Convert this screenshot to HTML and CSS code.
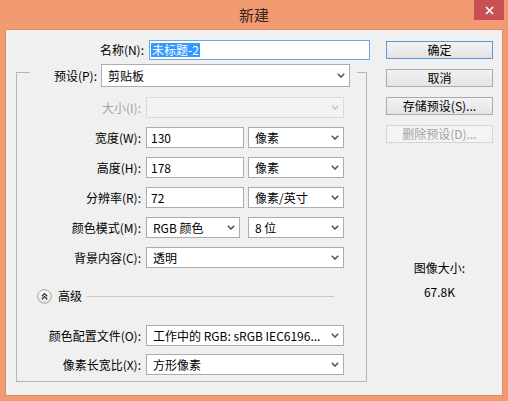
FILE: index.html
```html
<!DOCTYPE html>
<html lang="zh-CN">
<head>
<meta charset="utf-8">
<title>新建</title>
<link rel="stylesheet" href="styles.css">
</head>
<body>
<div class="window">
  <div class="titlebar">
    <div class="title">新建</div>
    <div class="close"><svg width="9" height="9" viewBox="0 0 9 9"><path d="M1 1L8 8M8 1L1 8" stroke="#fff" stroke-width="1.7" fill="none"/></svg></div>
  </div>
  <div class="client">
    <div class="form">
      <div class="name-row">
        <span class="name-label">名称(N):</span>
        <div class="textbox name-box"><span class="sel">未标题-2</span></div>
      </div>
      <fieldset class="group">
        <legend class="legend">
          <div class="preset-row">
            <span class="preset-label">预设(P):</span>
            <div class="combo preset-combo"><span class="combo-text">剪贴板</span><svg class="arrow" width="8" height="5" viewBox="0 0 8 5"><path d="M0.8 0.8L4 4L7.2 0.8" stroke="#555" stroke-width="1.6" fill="none"/></svg></div>
          </div>
        </legend>
        <div class="rows">
          <div class="row">
            <span class="label disabled">大小(I):</span>
            <div class="combo wide disabled-combo"><span class="combo-text"></span><svg class="arrow" width="8" height="5" viewBox="0 0 8 5"><path d="M0.8 0.8L4 4L7.2 0.8" stroke="#C4C4C4" stroke-width="1.6" fill="none"/></svg></div>
          </div>
          <div class="row">
            <span class="label">宽度(W):</span>
            <div class="textbox num">130</div>
            <div class="combo unit"><span class="combo-text">像素</span><svg class="arrow" width="8" height="5" viewBox="0 0 8 5"><path d="M0.8 0.8L4 4L7.2 0.8" stroke="#555" stroke-width="1.6" fill="none"/></svg></div>
          </div>
          <div class="row">
            <span class="label">高度(H):</span>
            <div class="textbox num">178</div>
            <div class="combo unit"><span class="combo-text">像素</span><svg class="arrow" width="8" height="5" viewBox="0 0 8 5"><path d="M0.8 0.8L4 4L7.2 0.8" stroke="#555" stroke-width="1.6" fill="none"/></svg></div>
          </div>
          <div class="row">
            <span class="label">分辨率(R):</span>
            <div class="textbox num">72</div>
            <div class="combo unit"><span class="combo-text">像素/英寸</span><svg class="arrow" width="8" height="5" viewBox="0 0 8 5"><path d="M0.8 0.8L4 4L7.2 0.8" stroke="#555" stroke-width="1.6" fill="none"/></svg></div>
          </div>
          <div class="row">
            <span class="label">颜色模式(M):</span>
            <div class="combo mode"><span class="combo-text">RGB 颜色</span><svg class="arrow" width="8" height="5" viewBox="0 0 8 5"><path d="M0.8 0.8L4 4L7.2 0.8" stroke="#555" stroke-width="1.6" fill="none"/></svg></div>
            <div class="combo unit bits"><span class="combo-text">8 位</span><svg class="arrow" width="8" height="5" viewBox="0 0 8 5"><path d="M0.8 0.8L4 4L7.2 0.8" stroke="#555" stroke-width="1.6" fill="none"/></svg></div>
          </div>
          <div class="row">
            <span class="label">背景内容(C):</span>
            <div class="combo wide"><span class="combo-text">透明</span><svg class="arrow" width="8" height="5" viewBox="0 0 8 5"><path d="M0.8 0.8L4 4L7.2 0.8" stroke="#555" stroke-width="1.6" fill="none"/></svg></div>
          </div>
        </div>
        <div class="advanced">
          <svg class="adv-icon" width="15" height="15" viewBox="0 0 15 15">
            <defs><linearGradient id="g" x1="0" y1="0" x2="0" y2="1"><stop offset="0" stop-color="#ffffff"/><stop offset="1" stop-color="#e2e2e2"/></linearGradient></defs>
            <circle cx="7.5" cy="7.5" r="6.8" fill="url(#g)" stroke="#A2A2A2" stroke-width="1"/>
            <path d="M4.8 7.2L7.5 4.6L10.2 7.2M4.8 10.2L7.5 7.6L10.2 10.2" stroke="#333" stroke-width="1.3" fill="none"/>
          </svg>
          <span class="adv-text">高级</span>
          <div class="adv-line"></div>
        </div>
        <div class="rows profile-rows">
          <div class="row">
            <span class="label">颜色配置文件(O):</span>
            <div class="combo wide"><span class="combo-text">工作中的 RGB: sRGB IEC6196...</span><svg class="arrow" width="8" height="5" viewBox="0 0 8 5"><path d="M0.8 0.8L4 4L7.2 0.8" stroke="#555" stroke-width="1.6" fill="none"/></svg></div>
          </div>
          <div class="row">
            <span class="label">像素长宽比(X):</span>
            <div class="combo wide"><span class="combo-text">方形像素</span><svg class="arrow" width="8" height="5" viewBox="0 0 8 5"><path d="M0.8 0.8L4 4L7.2 0.8" stroke="#555" stroke-width="1.6" fill="none"/></svg></div>
          </div>
        </div>
      </fieldset>
    </div>
    <div class="side">
      <div class="btn default">确定</div>
      <div class="btn">取消</div>
      <div class="btn">存储预设(S)...</div>
      <div class="btn disabled-btn">删除预设(D)...</div>
      <div class="info">
        <div>图像大小:</div>
        <div>67.8K</div>
      </div>
    </div>
  </div>
</div>
</body>
</html>
```

FILE: styles.css
```css
* { box-sizing: border-box; }
html, body { margin: 0; padding: 0; }
body {
  width: 508px;
  height: 401px;
  overflow: hidden;
  background: #F29B73;
  font-family: "Noto Sans CJK SC", "Noto Sans", sans-serif;
  font-size: 12px;
  color: #000;
}
.window {
  display: flex;
  flex-direction: column;
  height: 401px;
  padding: 0 5px 5px;
}
.titlebar {
  height: 29px;
  margin: 0 -5px;
  display: grid;
  grid-template-columns: 1fr auto 1fr;
}
.title {
  grid-column: 2;
  font-size: 15px;
  line-height: 29px;
  color: #3a2519;
}
.close {
  grid-column: 3;
  justify-self: end;
  align-self: start;
  width: 30px;
  height: 20px;
  margin-right: 4px;
  background: #C75050;
  display: flex;
  align-items: center;
  justify-content: center;
}
.client {
  flex: 1;
  display: flex;
  background: #F0F0F0;
  border: 1px solid #E2895F;
}
.form {
  width: 364px;
  padding: 10px 0 0 10px;
}
.name-row {
  display: flex;
  align-items: center;
  height: 20px;
}
.name-label {
  width: 128px;
  margin-right: 5px;
  text-align: right;
  line-height: 16px;
}
.textbox {
  display: flex;
  align-items: center;
  height: 21px;
  background: #fff;
  border: 1px solid #ABADB3;
  padding: 0 4px;
  line-height: 16px;
}
.name-box {
  width: 221px;
  height: 20px;
  border-color: #6FA8E0;
  padding: 0 1px;
}
.sel {
  display: inline-block;
  background: #3399FF;
  color: #fff;
  line-height: 14px;
  height: 14px;
  padding: 0 1px;
}
.group {
  width: 351px;
  margin: -3px 0 0 0;
  padding: 10px 8px 6px 13px;
  border: 1px solid #B4B4B4;
  min-width: 0;
}
.legend {
  padding: 7px 7px 0 0;
  margin: 0;
}
.preset-row {
  display: flex;
  align-items: center;
}
.preset-label {
  width: 67px;
  margin-right: 4px;
  text-align: right;
  line-height: 16px;
}
.combo {
  display: flex;
  align-items: center;
  height: 21px;
  background: #fff;
  border: 1px solid #ACACAC;
  padding: 0 4px 0 6px;
  line-height: 16px;
}
.combo-text {
  flex: 1;
  white-space: nowrap;
  overflow: hidden;
}
.arrow { flex: none; margin-left: 2px; }
.preset-combo {
  width: 249px;
  height: 23px;
}
.rows {
  display: flex;
  flex-direction: column;
  gap: 9px;
}
.row {
  display: flex;
  align-items: center;
  height: 21px;
}
.label {
  width: 111px;
  margin-right: 5px;
  text-align: right;
  line-height: 16px;
  white-space: nowrap;
}
.label.disabled { color: #A3A3A3; }
.wide { width: 198px; }
.num { width: 98px; margin-right: 4px; }
.unit { width: 96px; }
.mode { width: 94px; margin-right: 8px; }
.disabled-combo {
  background: #F3F3F3;
  border-color: #D9D9D9;
}
.advanced {
  display: flex;
  align-items: center;
  height: 16px;
  margin-top: 20px;
}
.adv-icon { margin-left: 7px; flex: none; }
.adv-text {
  margin-left: 6px;
  line-height: 16px;
}
.adv-line {
  flex: 1;
  height: 1px;
  background: #C6C6C6;
  margin: 0 24px 0 5px;
}
.profile-rows {
  margin-top: 21px;
  gap: 8px;
}
.side {
  width: 107px;
  margin-left: 16px;
  padding-top: 11px;
  display: flex;
  flex-direction: column;
}
.btn {
  height: 18px;
  margin-bottom: 10px;
  border: 1px solid #ACACAC;
  background: linear-gradient(#F2F2F2, #E4E4E4);
  text-align: center;
  line-height: 16px;
}
.btn.default { border-color: #5B9BD5; }
.btn.disabled-btn {
  background: #F4F4F4;
  border-color: #D5D5D5;
  color: #A3A3A3;
  margin-bottom: 0;
}
.info {
  margin-top: 113px;
  text-align: center;
  line-height: 24px;
}
```
